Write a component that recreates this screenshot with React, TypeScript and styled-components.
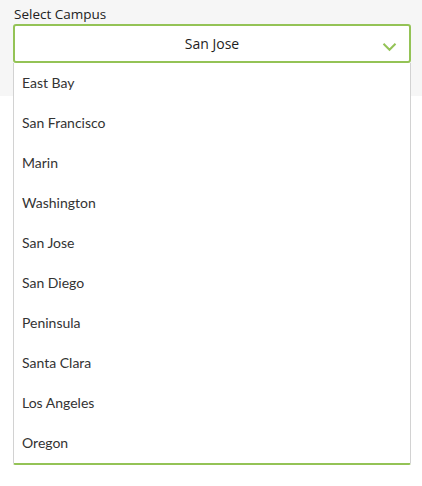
import React from "react";
import styled, { createGlobalStyle } from "styled-components";

const Global = createGlobalStyle`
  html, body { margin: 0; padding: 0; background: #ffffff; }
  body { font-family: "Open Sans", "Liberation Sans", sans-serif; }
`;

const Page = styled.div`
  min-height: 486px;
  background: linear-gradient(to bottom, #f6f6f6 0, #f6f6f6 96px, #ffffff 96px);
  padding: 5px 11px 0 13px;
  box-sizing: border-box;
  display: flex;
  flex-direction: column;
`;

const Label = styled.div`
  font-family: "Open Sans", sans-serif;
  font-size: 13.5px;
  line-height: 19px;
  color: #222;
  padding-left: 1px;
`;

const Field = styled.div`
  position: relative;
  width: 398px;
  display: flex;
  flex-direction: column;
`;

const SelectBox = styled.div`
  box-sizing: border-box;
  height: 39px;
  border: 2px solid #94c356;
  border-radius: 3px;
  background: #ffffff;
  display: flex;
  align-items: center;
  justify-content: center;
  font-family: "Open Sans", sans-serif;
  font-size: 14px;
  color: #1e1e1e;
`;

const Chevron = styled.svg`
  position: absolute;
  right: 14px;
  top: 18px;
`;

const Menu = styled.ul`
  width: 396px;
  margin: 0;
  padding: 0;
  list-style: none;
  background: #ffffff;
  border-left: 1px solid #d2d2d2;
  border-right: 1px solid #d2d2d2;
  border-bottom: 2px solid #94c356;
  border-radius: 0 0 2px 2px;
`;

const Option = styled.li`
  box-sizing: border-box;
  height: 40px;
  display: flex;
  align-items: center;
  padding: 0 0 2px 8px;
  font-family: Lato, "Open Sans", sans-serif;
  font-size: 14px;
  color: #333;
`;

const campuses = [
  "East Bay",
  "San Francisco",
  "Marin",
  "Washington",
  "San Jose",
  "San Diego",
  "Peninsula",
  "Santa Clara",
  "Los Angeles",
  "Oregon",
];

export default function App() {
  return (
    <>
      <Global />
      <Page>
        <Label>Select Campus</Label>
        <Field>
          <SelectBox>San Jose</SelectBox>
          <Chevron width="15" height="10" viewBox="0 0 15 10">
            <path d="M1.5 1.8 L7.5 7.8 L13.5 1.8" fill="none" stroke="#94c356" strokeWidth="2" />
          </Chevron>
          <Menu>
            {campuses.map((c) => (
              <Option key={c}>{c}</Option>
            ))}
          </Menu>
        </Field>
      </Page>
    </>
  );
}
